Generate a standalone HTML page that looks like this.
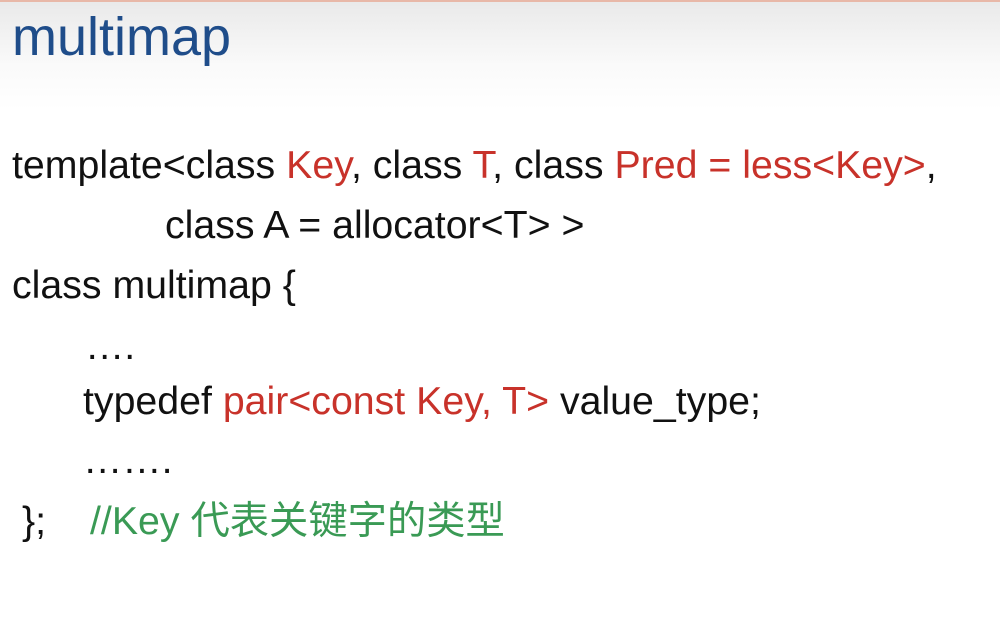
<!DOCTYPE html>
<html><head><meta charset="utf-8"><style>
html,body{margin:0;padding:0}
body{width:1000px;height:624px;overflow:hidden;position:relative;background:#fff;font-family:"Liberation Sans","Noto Sans CJK SC",sans-serif}
.top{position:absolute;left:0;top:0;width:1000px;height:110px;background:linear-gradient(#e9e9e9,#fafafa 60%,#fff)}
.bar{position:absolute;left:0;top:0;width:1000px;height:2px;background:#e8b8a8}
.t{position:absolute;left:12px;top:7px;font-size:54px;color:#1f4d8a;line-height:60px}
.l{position:absolute;font-size:39.3px;color:#111;white-space:pre;line-height:40px}
.r{color:#c8322a}.g{color:#3a9a55}
</style></head><body>
<div class="top"></div><div class="bar"></div>
<div class="t">multimap</div>
<div class="l" style="left:12px;top:145px">template&lt;class <span class="r">Key</span>, class <span class="r">T</span>, class <span class="r">Pred = less&lt;Key&gt;</span>,</div>
<div class="l" style="left:165px;top:205px">class A = allocator&lt;T&gt; &gt;</div>
<div class="l" style="left:12px;top:265px">class multimap {</div>
<div class="l" style="left:85px;top:326px">….</div>
<div class="l" style="left:83px;top:381px">typedef <span class="r">pair&lt;const Key, T&gt;</span> value_type;</div>
<div class="l" style="left:83px;top:440px">…….</div>
<div class="l" style="left:22px;top:501px">};</div>
<div class="l g" style="left:90px;top:501px">//Key 代表关键字的类型</div>
</body></html>
